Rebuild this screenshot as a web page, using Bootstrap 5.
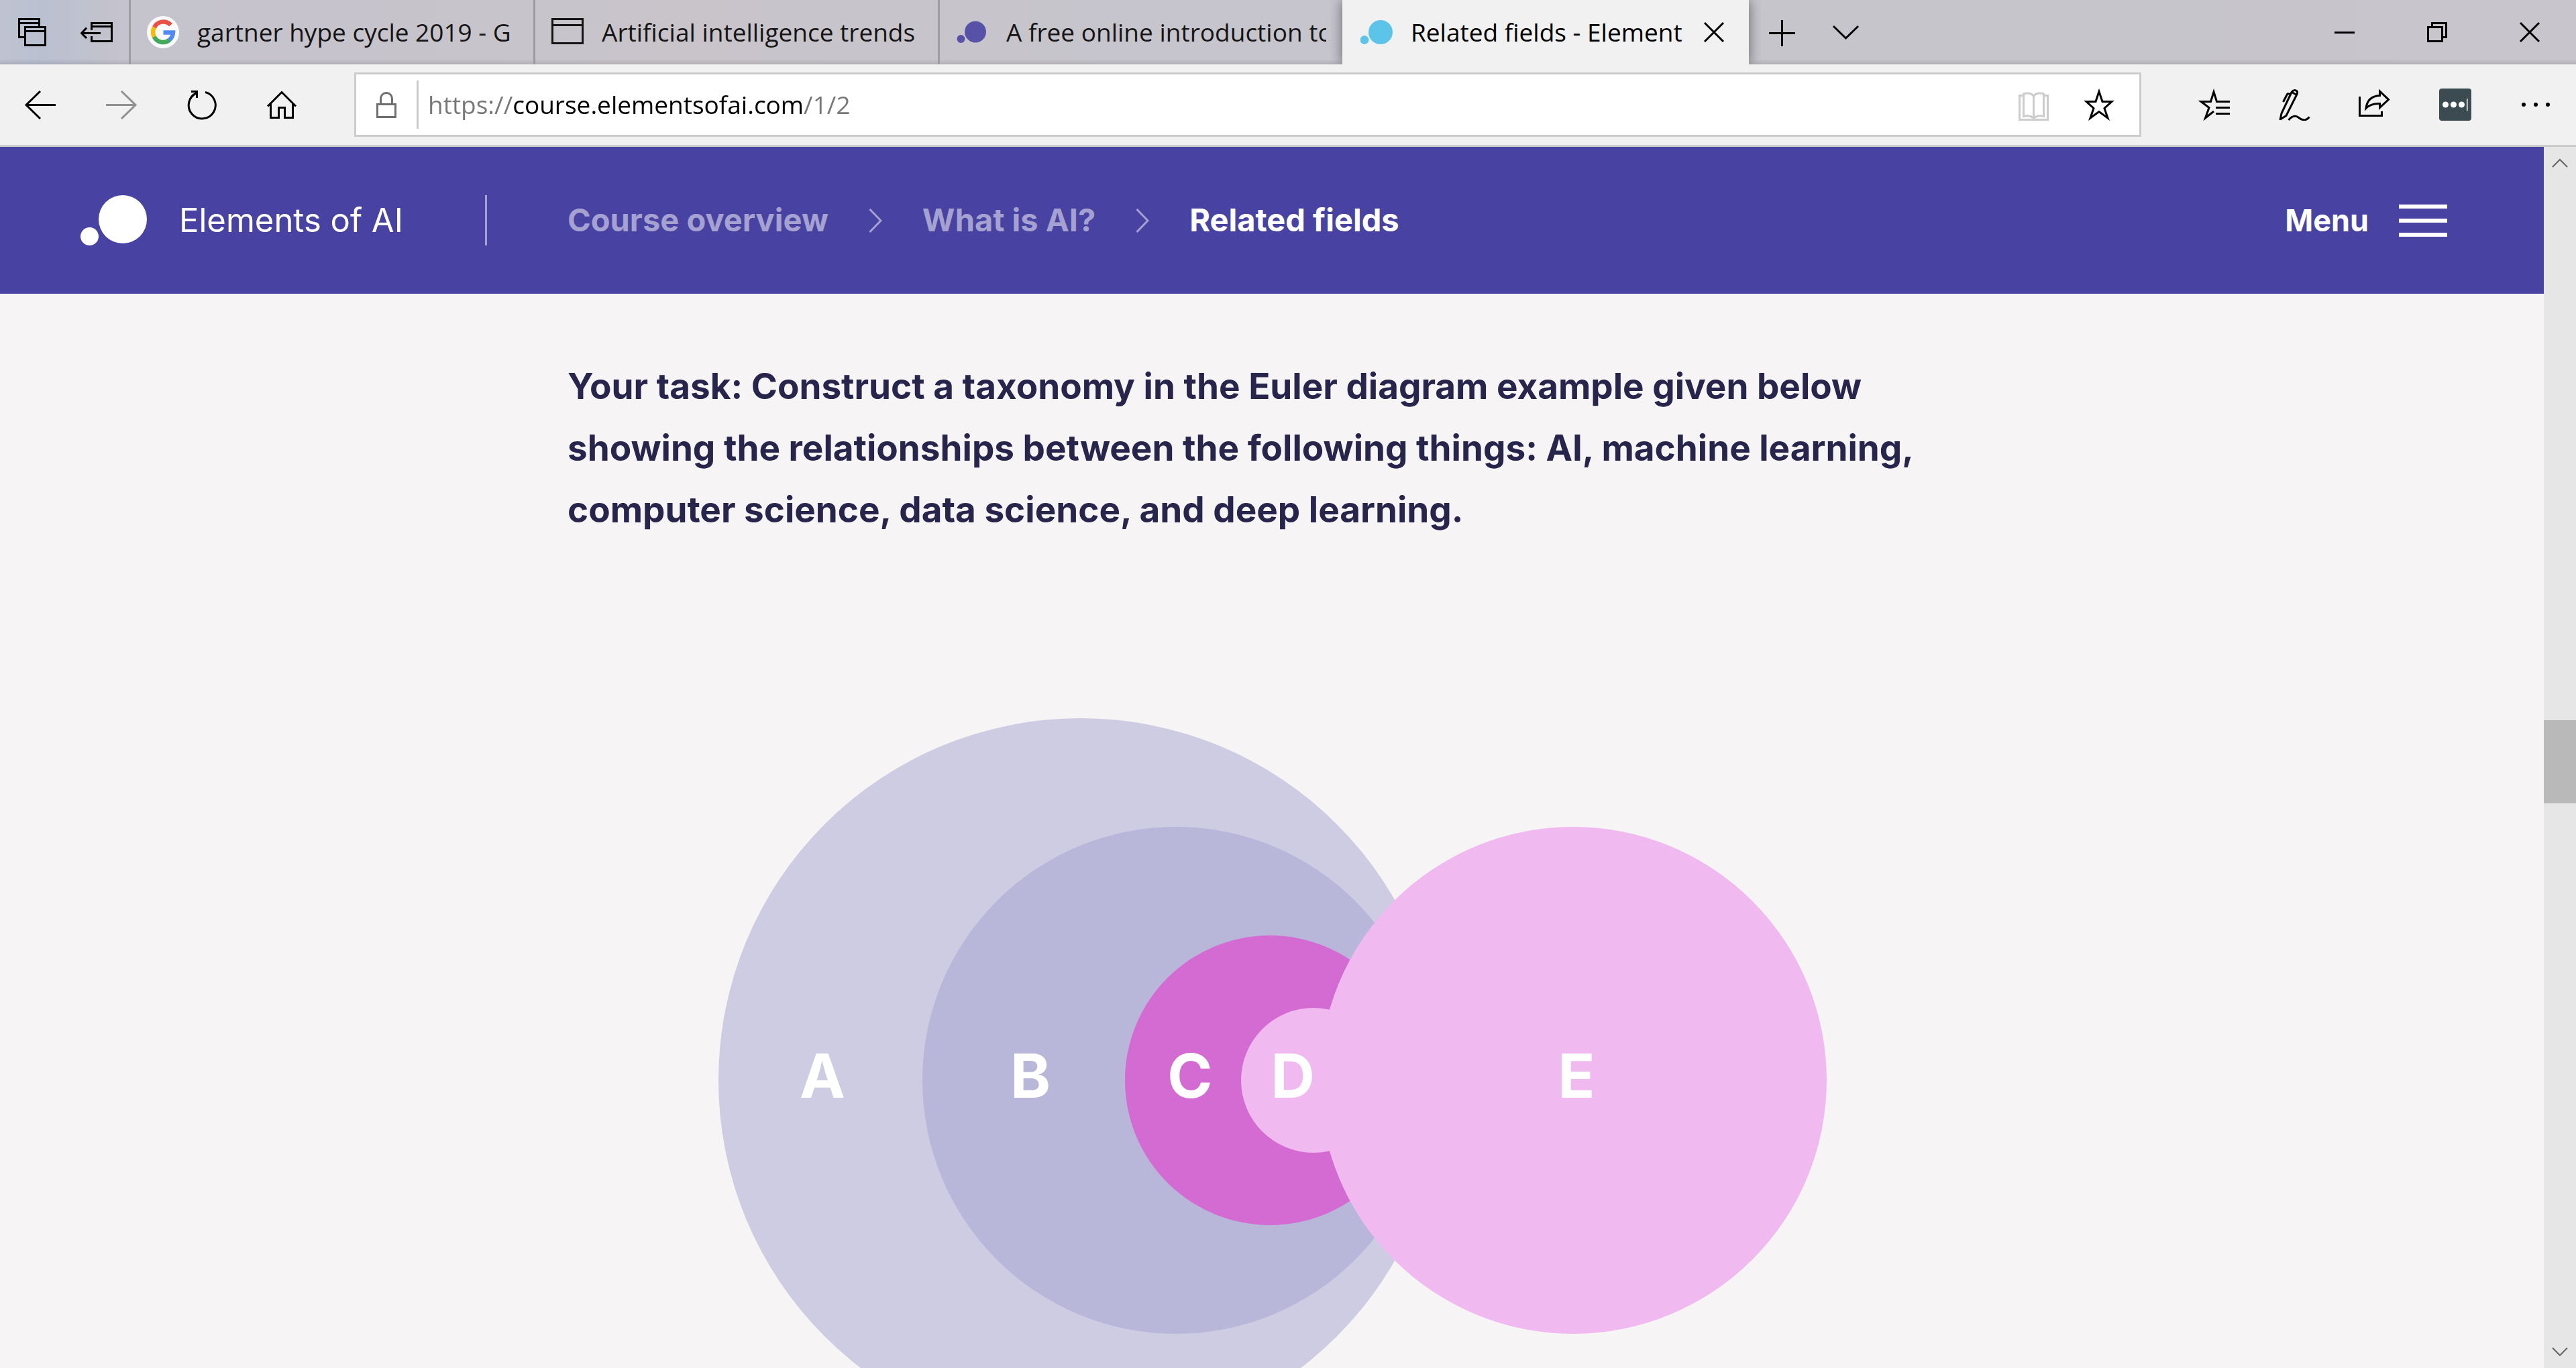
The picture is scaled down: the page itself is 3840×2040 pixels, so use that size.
<!DOCTYPE html>
<html lang="en">
<head>
<meta charset="utf-8">
<meta name="viewport" content="width=device-width, initial-scale=1">
<title>Related fields - Elements of AI</title>
<link rel="stylesheet" href="https://cdn.jsdelivr.net/npm/bootstrap@5.3.0/dist/css/bootstrap.min.css">
<style>
  :root { --chrome: #f1f1f1; --edge: #cccccc; --brand: #4843a3; --brand-soft: #a5a1d1; --page: #f6f4f5; --ink: #27254b; }
  body { font-family: "Open Sans", "Noto Sans", sans-serif; font-size: 37px; background: var(--page); }
  svg { display: block; flex: none; fill: none; }
  .ico { width: 48px; height: 48px; stroke: currentColor; stroke-width: 3; }

  /* browser chrome */
  .plain-btn { display: flex; align-items: center; justify-content: center; flex: none; padding: 0; border: 0; background: none; color: #000; width: 96px; }
  .tab-strip { height: 96px; background: linear-gradient(#0000 88px, #0000001c 96px), linear-gradient(90deg, #bfc3d1 0, #b9c0d0 60px, #c5c3cd 180px, #c8c4ca 1000px, #c6c5cd 2000px, #c6c5cb 3200px, #c9c5cc 100%); }
  .tab-item { display: flex; align-items: center; width: 603px; padding: 0 24px; border: 0; border-left: 3px solid #9e9ca3; background: none; color: #151515; text-align: left; }
  .tab-item span { flex: 1; margin-left: 27px; overflow: hidden; white-space: nowrap; }
  .tab-current { width: 606px; background: var(--chrome); border-left-color: var(--chrome); color: #000; padding-right: 0; box-shadow: 0 0 18px #00000080; clip-path: inset(0 -18px); }
  .win-btn { width: 138px; }
  .tool-bar { height: 123px; background: var(--chrome); border-bottom: 3px solid var(--edge); }
  .tool-bar > .plain-btn { width: 120px; }
  .address-box { height: 96px; margin: 0 48px; padding-right: 12px; background: #fff; border: 3px solid var(--edge); }
  .address-box .lock-btn { width: 90px; color: #6f6f6f; }
  .address-box .rule { width: 3px; height: 72px; background: var(--edge); }
  .address-input { min-width: 0; padding: 0 0 0 14px; border: 0; outline: 0; line-height: 54px; color: transparent;
    background: linear-gradient(90deg, #777 140px, #000 140px, #000 574px, #777 574px); -webkit-background-clip: text; background-clip: text; }

  /* page */
  .site { font-family: Inter, "Open Sans", sans-serif; }
  .site-header { height: 219px; background: var(--brand); padding: 0 144px 0 120px; }
  .site-brand { width: 603px; gap: 48px; font-size: 49px; color: #fff; text-decoration: none; }
  .site-rule { width: 3px; height: 75px; background: var(--brand-soft); }
  .crumbs { gap: 60px; padding-left: 120px; font-size: 47px; font-weight: 700; color: var(--brand-soft); }
  .crumbs a { color: inherit; text-decoration: none; }
  .crumbs .here { color: #fff; }
  .menu-btn { width: auto; gap: 45px; font-size: 45px; font-weight: 700; color: #fff; }
  .lesson { max-width: 2100px; padding-top: 92px; }
  .task-text { margin: 0 0 265px; font-size: 53px; line-height: 92px; font-weight: 700; color: var(--ink); }
  .euler { width: 100%; max-width: 1654px; margin: 0 auto; }
  .euler text { font-size: 91px; font-weight: 700; fill: #fff; text-anchor: middle; }
  .scroll-rail { width: 48px; background: #e6e6e6; }
  .scroll-rail .plain-btn { width: 48px; height: 48px; color: #666; }
  .scroll-thumb { height: 124px; background: #b9b9b9; }
</style>
<script src="https://cdn.jsdelivr.net/npm/bootstrap@5.3.0/dist/js/bootstrap.bundle.min.js"></script>
</head>
<body class="vh-100 overflow-hidden d-flex flex-column">

<div class="tab-strip d-flex align-items-stretch flex-shrink-0">
  <button class="plain-btn" type="button" aria-label="Tabs you've set aside">
    <svg class="ico" viewBox="0 0 48 48"><path d="M13 31.500H4.500V4.500H34.500V15M4.500 10.500H34.500M13.500 16.500H43.500V43.500H13.500ZM13.500 22.500H43.500"/></svg>
  </button>
  <button class="plain-btn" type="button" aria-label="Set these tabs aside">
    <svg class="ico" viewBox="0 0 48 48"><path d="M16.500 21V10.500H46.500V37.500H16.500V30M16.500 15.500H46.500M30 25.500H2M9 17.500L1.500 25.500L9 33"/></svg>
  </button>
  <button class="tab-item" type="button">
    <svg width="48" height="48" viewBox="0 0 48 48"><circle cx="24" cy="24" r="24" fill="#fafafa"/><g stroke-width="6.500"><path d="M35.500 13.200A15 15 0 0 0 11 17" stroke="#ea5045"/><path d="M11.200 16.500A15 15 0 0 0 11.200 31.500" stroke="#fabb05"/><path d="M10.800 31A15 15 0 0 0 33.700 35.500" stroke="#43aa5d"/><path d="M33.400 35.700A15 15 0 0 0 39 24.500H24.500" stroke="#4f8bf3"/></g></svg>
    <span>gartner hype cycle 2019 - G</span>
  </button>
  <button class="tab-item" type="button">
    <svg class="ico" viewBox="0 0 48 48" stroke="#3a383d"><path d="M1.500 4.500H46.500V40.500H1.500ZM1.500 13.500H46.500"/></svg>
    <span>Artificial intelligence trends</span>
  </button>
  <button class="tab-item" type="button">
    <svg width="48" height="48" viewBox="0 0 48 48"><circle cx="29" cy="23.500" r="16" fill="#5751a8"/><circle cx="7.500" cy="34" r="6" fill="#5751a8"/></svg>
    <span>A free online introduction to</span>
  </button>
  <div class="tab-item tab-current">
    <svg width="48" height="48" viewBox="0 0 48 48"><circle cx="30" cy="24" r="18" fill="#5cc4e8"/><circle cx="6" cy="35.500" r="6.500" fill="#5cc4e8"/></svg>
    <span>Related fields - Element</span>
    <button class="plain-btn h-100" type="button" aria-label="Close tab">
      <svg class="ico" viewBox="0 0 48 48" stroke="#333"><path d="M6 10L34 38M34 10L6 38"/></svg>
    </button>
  </div>
  <button class="plain-btn" type="button" aria-label="New tab"><svg class="ico" viewBox="0 0 48 48"><path d="M6 25.500H45M25.500 6V45"/></svg></button>
  <button class="plain-btn" type="button" aria-label="Show tab previews"><svg class="ico" viewBox="0 0 48 48"><path d="M6 15L24.500 33L43 15"/></svg></button>
  <button class="plain-btn win-btn ms-auto" type="button" aria-label="Minimise"><svg class="ico" viewBox="0 0 48 48"><path d="M9 24.500H39"/></svg></button>
  <button class="plain-btn win-btn" type="button" aria-label="Restore"><svg class="ico" viewBox="0 0 48 48"><path d="M10.500 16.500H31.500V37.500H10.500ZM16.500 16V10.500H37.500V31.500H32"/></svg></button>
  <button class="plain-btn win-btn" type="button" aria-label="Close"><svg class="ico" viewBox="0 0 48 48"><path d="M10 10L38 38M38 10L10 38"/></svg></button>
</div>

<div class="tool-bar d-flex align-items-center flex-shrink-0">
  <button class="plain-btn" type="button" aria-label="Back"><svg class="ico" viewBox="0 0 48 48"><path d="M47 24.500H3M24 4L3 24.500L24 45"/></svg></button>
  <button class="plain-btn" type="button" aria-label="Forward"><svg class="ico" viewBox="0 0 48 48" stroke="#919191" style="stroke:#919191"><path d="M2 24.500H46M25 4L46 24.500L25 45"/></svg></button>
  <button class="plain-btn" type="button" aria-label="Refresh"><svg class="ico" viewBox="0 0 48 48"><path d="M30 5.500A20 20 0 1 1 17.500 6.500M9 4.500H17.500V14"/></svg></button>
  <button class="plain-btn" type="button" aria-label="Home"><svg class="ico" viewBox="0 0 48 48"><path d="M3 26.500L24 5.500L45 26.500M7.500 22V43.500H19.500V28.500H28.500V43.500H40.500V22"/></svg></button>
  <div class="address-box d-flex align-items-center flex-grow-1">
    <button class="plain-btn lock-btn" type="button" aria-label="Site information"><svg class="ico" viewBox="0 0 48 48"><path d="M10.500 23.500H37.500V42.500H10.500ZM15.500 23V15A8.500 8.500 0 0 1 32.500 15V23"/></svg></button>
    <div class="rule"></div>
    <input class="address-input flex-grow-1" type="text" aria-label="Address" value="https://course.elementsofai.com/1/2">
    <button class="plain-btn" type="button" aria-label="Reading view"><svg class="ico" viewBox="0 0 48 48" style="color:#ccc"><path d="M7 10.500H1.500V46.500H43.500V10.500H38M7.500 8C13 6 20 7 22.500 11.500C25 7 32 6 37.500 8V41.500C32 40 26 41 22.500 44.500C19 41 13 40 7.500 41.500ZM22.500 11V44"/></svg></button>
    <button class="plain-btn" type="button" aria-label="Add to favourites"><svg class="ico" viewBox="0 0 48 48"><path d="M24 4.500L29 19.500H43L32 29.500L37 44L24 34.500L11 44L16 29.500L5 19.500H19Z"/></svg></button>
  </div>
  <button class="plain-btn" type="button" aria-label="Hub"><svg class="ico" viewBox="0 0 48 48"><path d="M24 34L11.500 44L17 28.500L5 19.500H19.500L24 5L28.500 19.500H48M27 28.500H48M27 37.500H48"/></svg></button>
  <button class="plain-btn" type="button" aria-label="Add notes"><svg class="ico" viewBox="0 0 48 48"><path d="M3 47L5 37L20 5.500Q24 .500 28 4Q29.500 6 27.500 9.500L12 40.500L4 45.500M20.500 5.500L27.500 9.500M7.500 20L13.500 8.500Q14.500 7 17.500 8.500M15.500 47Q23 38 30 43Q40 51 46.500 42.500"/></svg></button>
  <button class="plain-btn" type="button" aria-label="Share"><svg class="ico" viewBox="0 0 48 48"><path d="M1.500 12V40.500H34.500V34M31.500 4L44.500 16.500L31.500 28.500V22.500Q18 22 11 29.500Q13 11.500 31.500 10.500Z"/></svg></button>
  <button class="plain-btn" type="button" aria-label="Password manager"><svg width="48" height="48" viewBox="0 0 48 48"><rect width="48" height="48" rx="4" fill="#3c4a52"/><g fill="#fff"><circle cx="9.500" cy="24" r="4.500"/><circle cx="21.500" cy="24" r="4.500"/><circle cx="33.500" cy="24" r="4.500"/><path d="M41 15H42.500V33H41Z"/></g></svg></button>
  <button class="plain-btn" type="button" aria-label="Settings and more"><svg width="48" height="48" viewBox="0 0 48 48"><g fill="#000"><circle cx="6" cy="24" r="3"/><circle cx="24" cy="24" r="3"/><circle cx="42" cy="24" r="3"/></g></svg></button>
</div>

<div class="site d-flex flex-grow-1 overflow-hidden">
  <div class="flex-grow-1 overflow-hidden">
    <header class="site-header d-flex align-items-center">
      <a class="site-brand d-flex align-items-center" href="#">
        <svg width="99" height="75" viewBox="0 0 99 75"><circle cx="63" cy="36" r="36" fill="#fff"/><circle cx="13.500" cy="61.500" r="13.500" fill="#fff"/></svg>
        <span>Elements of AI</span>
      </a>
      <div class="site-rule"></div>
      <nav class="crumbs d-flex align-items-center" aria-label="Breadcrumb">
        <a href="#">Course overview</a>
        <svg width="20" height="36" viewBox="0 0 20 36" stroke="currentColor" stroke-width="3"><path d="M1.500 1L18 18L1.500 35"/></svg>
        <a href="#">What is AI?</a>
        <svg width="20" height="36" viewBox="0 0 20 36" stroke="currentColor" stroke-width="3"><path d="M1.500 1L18 18L1.500 35"/></svg>
        <a class="here" href="#" aria-current="page">Related fields</a>
      </nav>
      <button class="plain-btn menu-btn ms-auto" type="button">
        Menu
        <svg width="72" height="48" viewBox="0 0 72 48" stroke="#fff" stroke-width="6"><path d="M0 3H72M0 24H72M0 45H72"/></svg>
      </button>
    </header>
    <main class="lesson mx-auto">
      <p class="task-text">Your task: Construct a taxonomy in the Euler diagram example given below showing the relationships between the following things: AI, machine learning, computer science, data science, and deep learning.</p>
      <svg class="euler" viewBox="0 0 1654 1080" role="img" aria-label="Euler diagram with areas A to E">
        <circle cx="542" cy="540" r="540" fill="#cecce2"/>
        <circle cx="684" cy="540" r="378" fill="#b8b6d9"/>
        <circle cx="824" cy="540" r="216" fill="#d46bd3"/>
        <circle cx="889" cy="540" r="108" fill="#f0b9ef"/>
        <circle cx="1276" cy="540" r="378" fill="#f0b9ef"/>
        <text x="157" y="566">A</text>
        <text x="467" y="566">B</text>
        <text x="705" y="566">C</text>
        <text x="858" y="566">D</text>
        <text x="1281" y="566">E</text>
      </svg>
    </main>
  </div>
  <div class="scroll-rail d-flex flex-column flex-shrink-0">
    <button class="plain-btn" type="button" aria-label="Scroll up"><svg width="24" height="14" viewBox="0 0 24 14" stroke="currentColor" stroke-width="2"><path d="M1 13L12 2L23 13"/></svg></button>
    <div style="flex:807"></div>
    <div class="scroll-thumb"></div>
    <div style="flex:794"></div>
    <button class="plain-btn" type="button" aria-label="Scroll down"><svg width="24" height="14" viewBox="0 0 24 14" stroke="currentColor" stroke-width="2"><path d="M1 1L12 12L23 1"/></svg></button>
  </div>
</div>
</body>
</html>
